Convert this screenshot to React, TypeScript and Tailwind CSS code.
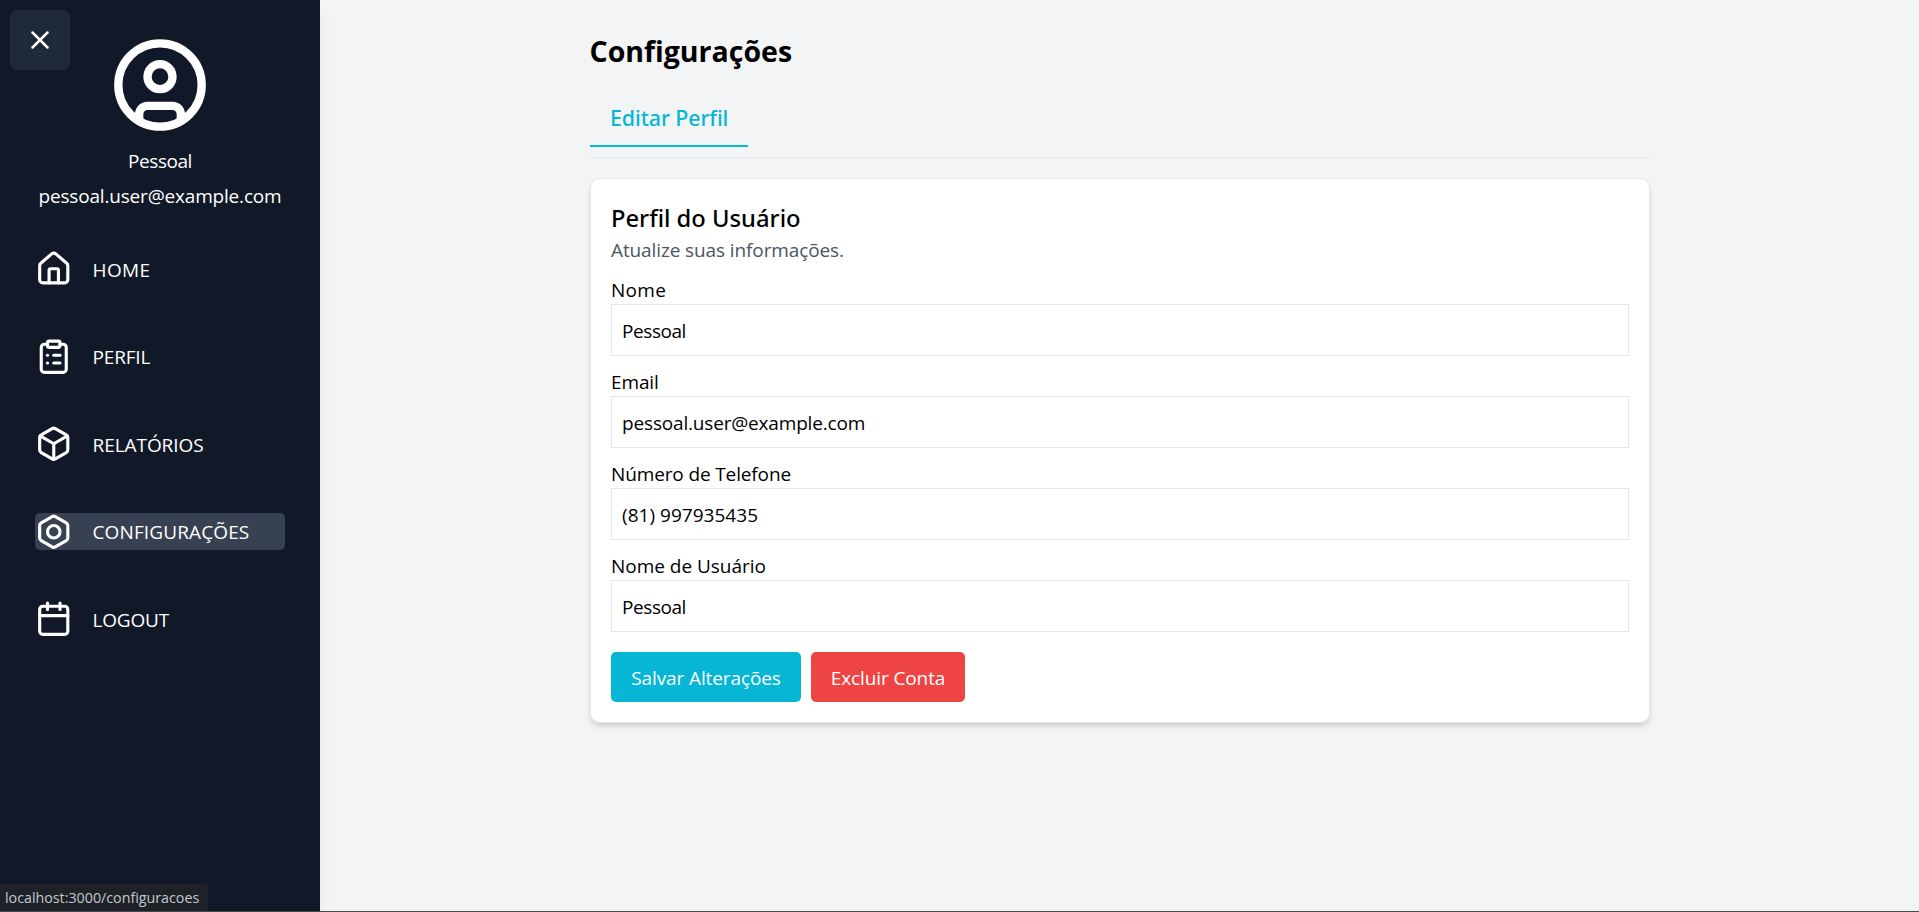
import type { LucideIcon } from 'lucide-react';
import { Bolt, Box, Calendar, CircleUser, ClipboardList, House, X } from 'lucide-react';

type NavItem = { label: string; icon: LucideIcon; tracking: string; active?: boolean };
type Field = { id: string; label: string; value: string; labelTracking: string; valueTracking: string };

const navItems: NavItem[] = [
  { label: 'HOME', icon: House, tracking: 'tracking-[0.4px]' },
  { label: 'PERFIL', icon: ClipboardList, tracking: 'tracking-[-0.17px]' },
  { label: 'RELATÓRIOS', icon: Box, tracking: 'tracking-[-0.06px]' },
  { label: 'CONFIGURAÇÕES', icon: Bolt, tracking: 'tracking-[0.12px]', active: true },
  { label: 'LOGOUT', icon: Calendar, tracking: 'tracking-[-0.2px]' },
];

const fields: Field[] = [
  { id: 'nome', label: 'Nome', value: 'Pessoal', labelTracking: 'tracking-[0.3px]', valueTracking: 'tracking-[-0.45px]' },
  { id: 'email', label: 'Email', value: 'pessoal.user@example.com', labelTracking: 'tracking-[-0.13px]', valueTracking: 'tracking-[-0.18px]' },
  { id: 'telefone', label: 'Número de Telefone', value: '(81) 997935435', labelTracking: 'tracking-[-0.13px]', valueTracking: 'tracking-[0.02px]' },
  { id: 'usuario', label: 'Nome de Usuário', value: 'Pessoal', labelTracking: 'tracking-[-0.02px]', valueTracking: 'tracking-[-0.45px]' },
];

function Sidebar() {
  return (
    <aside className="relative z-10 flex w-80 shrink-0 flex-col bg-[#111827] px-[35px] pt-[35px] text-white shadow-[0_12.5px_18.75px_-3.75px_rgba(0,0,0,0.1),0_5px_7.5px_-5px_rgba(0,0,0,0.1)]">
      <button
        aria-label="Fechar menu"
        className="absolute top-2.5 left-2.5 flex size-[60px] items-center justify-center rounded-[7.5px] bg-[#1f2937]"
      >
        <X size={30} />
      </button>
      <div className="flex flex-col items-center">
        <CircleUser size={100} />
        <p className="mt-2.5 h-[30px] pt-px leading-[30px] tracking-[-0.45px]">Pessoal</p>
        <p className="mt-[5px] h-[30px] pt-px leading-[30px] tracking-[-0.18px] whitespace-nowrap">pessoal.user@example.com</p>
      </div>
      <nav className="mt-10 flex flex-col gap-[50px]">
        {navItems.map(({ label, icon: Icon, tracking, active }) => (
          <a
            key={label}
            className={`flex h-[37.5px] items-center gap-5 rounded-[5px] ${active ? 'bg-[#374151]' : ''}`}
          >
            <Icon size={37.5} className="shrink-0" />
            <span className={`pt-[1.7px] leading-[30px] ${tracking}`}>{label}</span>
          </a>
        ))}
      </nav>
    </aside>
  );
}

function ProfileCard() {
  return (
    <section className="rounded-[10px] border border-[#e5e7eb] bg-white p-5 shadow-[0_5px_7.5px_-1.25px_rgba(0,0,0,0.1),0_2.5px_5px_-2.5px_rgba(0,0,0,0.1)]">
      <h2 className="h-[35px] pt-0.5 pl-[0.5px] font-['Noto_Sans',sans-serif] text-[23.75px] leading-[35px] font-medium">
        Perfil do Usuário
      </h2>
      <p className="h-[30px] pt-px pl-[0.5px] leading-[30px] tracking-[-0.11px] text-[#4b5563]">Atualize suas informações.</p>
      <form className="mt-2.5">
        <div className="flex flex-col gap-2.5">
          {fields.map((f) => (
            <div key={f.id} className="flex flex-col">
              <label htmlFor={f.id} className={`h-[30px] pt-px pl-[0.5px] leading-[30px] ${f.labelTracking}`}>
                {f.label}
              </label>
              <input
                id={f.id}
                defaultValue={f.value}
                className={`h-[52px] w-full border border-[#e5e7eb] bg-white pt-px pr-2.5 pl-[10.6px] outline-none ${f.valueTracking}`}
              />
            </div>
          ))}
        </div>
        <div className="mt-5 flex gap-2.5">
          <button type="button" className="h-[50px] w-[190px] rounded-[5px] bg-[#06b6d4] pt-0.5 pl-px tracking-[-0.11px] text-white">
            Salvar Alterações
          </button>
          <button type="button" className="h-[50px] w-[154px] rounded-[5px] bg-[#ef4444] pt-0.5 pl-px tracking-[-0.11px] text-white">
            Excluir Conta
          </button>
        </div>
      </form>
    </section>
  );
}

export default function App() {
  return (
    <div className="relative flex h-[912px] w-full overflow-hidden bg-[#f3f4f6] font-['Open_Sans','Noto_Sans',sans-serif] text-[19px] text-black">
      <Sidebar />
      <main className="flex flex-1 justify-center pt-[30px]">
        <div className="w-[1060px]">
          <h1 className="h-10 pt-px text-[28.5px] leading-10 font-bold">Configurações</h1>
          <div className="mt-5 border-b border-[#e5e7eb] pb-2.5">
            <div className="flex h-[57px] w-[158px] border-b-2 border-[#06b6d4] pt-2.5 pl-[20.5px] font-['Noto_Sans',sans-serif] text-[21.4px] leading-[35px] font-medium tracking-[-0.1px] whitespace-nowrap text-[#06b6d4]">
              Editar Perfil
            </div>
          </div>
          <div className="mt-5">
            <ProfileCard />
          </div>
        </div>
      </main>
      <div className="absolute bottom-px left-0 z-20 h-[27px] w-[208px] rounded-tr-[4px] bg-[#1e2228] pl-[5px] text-[14.25px] leading-[28px] text-[#c3c7cc]">
        localhost:3000/configuracoes
      </div>
      <div className="absolute bottom-0 left-0 z-20 h-px w-full bg-[#4a4a4c]" />
    </div>
  );
}
